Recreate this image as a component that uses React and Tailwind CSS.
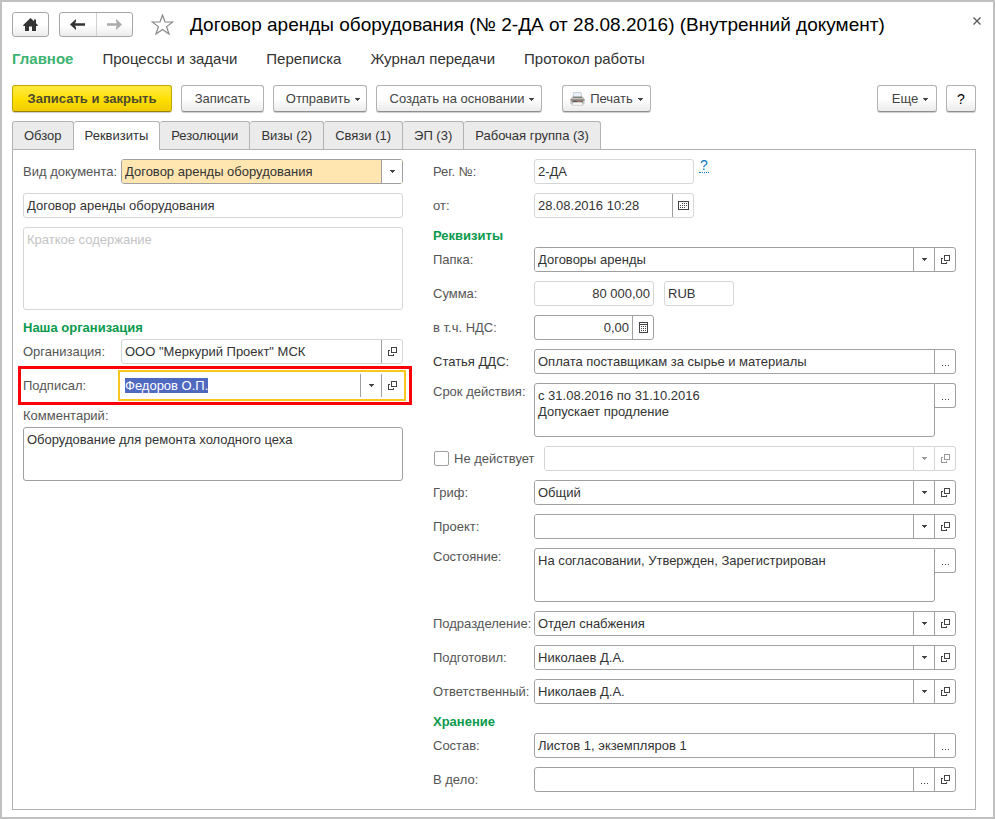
import { useEffect, useRef } from "react";

function ArrowIcon() {
  return (
    <svg width="5" height="3" viewBox="0 0 5 3" shapeRendering="crispEdges" fill="currentColor" aria-hidden="true">
      <path d="M0 0h5v1H4v1H3v1H2V2H1V1H0z" />
    </svg>
  );
}

function OpenIcon() {
  return (
    <svg width="9" height="9" viewBox="0 0 9 9" shapeRendering="crispEdges" fill="currentColor" aria-hidden="true">
      <path fillRule="evenodd" d="M3 0h6v6H3zM4 1v4h4V1z" />
      <path d="M0 3h2v1H1v4h4V7h1v2H0z" />
    </svg>
  );
}

function DotsIcon() {
  return (
    <svg width="7" height="9" viewBox="0 0 7 9" shapeRendering="crispEdges" fill="currentColor" aria-hidden="true">
      <path d="M0 8h1v1H0zM3 8h1v1H3zM6 8h1v1H6z" />
    </svg>
  );
}

function CalendarIcon() {
  return (
    <svg width="11" height="9" viewBox="0 0 11 9" shapeRendering="crispEdges" fill="currentColor" aria-hidden="true">
      <path fillRule="evenodd" d="M0 0h11v9H0zM1 1v7h9V1z" />
      <path d="M4 2h1v1H4zM6 2h1v1H6zM8 2h1v1H8zM2 4h1v1H2zM4 4h1v1H4zM6 4h1v1H6zM8 4h1v1H8zM2 6h1v1H2zM4 6h1v1H4zM6 6h1v1H6z" />
    </svg>
  );
}

function CalculatorIcon() {
  return (
    <svg width="9" height="11" viewBox="0 0 9 11" shapeRendering="crispEdges" fill="currentColor" aria-hidden="true">
      <path fillRule="evenodd" d="M0 0h9v11H0zM1 1v1h7V1zM1 3v7h7V3z" />
      <path d="M2 4h1v1H2zM4 4h1v1H4zM6 4h1v1H6zM2 6h1v1H2zM4 6h1v1H4zM6 6h1v1H6zM2 8h1v1H2zM4 8h1v1H4zM6 8h1v1H6z" />
    </svg>
  );
}

function PrinterIcon() {
  return (
    <svg width="15" height="14" viewBox="0 0 15 14" aria-hidden="true">
      <path d="M3.500.5h7.500l.8 5H3z" fill="#eaf1f8" stroke="#b4bfcb" strokeWidth=".7" />
      <path d="M2 4.800h11l1.500 2.200v4.500l-1 1H1.500l-1-1V7z" fill="#c4c0bc" />
      <path d="M3 4.600h9v1.300H3z" fill="#7d7d7d" />
      <path d="M.5 7.200h14v1.600H.5z" fill="#8c8884" />
      <path d="M2.500 8.800h10v1.500h-10z" fill="#4d4643" />
      <path d="M7 9h4v1H7z" fill="#b0604a" />
      <path d="M3 10.300h9l.7 3H2.300z" fill="#fafafa" stroke="#b8b8b8" strokeWidth=".6" />
    </svg>
  );
}

const icons = {
  open: [OpenIcon, "Открыть"],
  dots: [DotsIcon, "Выбрать"],
  calendar: [CalendarIcon, "Календарь"],
  calc: [CalculatorIcon, "Калькулятор"],
  arrow: [ArrowIcon, "Показать список"],
};

const textCls = "h-full w-full min-w-0 px-[3px] text-[13px] leading-4 text-[#333] outline-none";

function Frame({ light, focus, muted, className = "", children }) {
  const border = focus
    ? "border-transparent outline-2 outline-offset-1 outline-[#f7c61f]"
    : light
      ? "rounded-[3px] border-[#d6d6d6]"
      : "rounded-[3px] border-[#a0a0a0]";
  const tone = muted ? "text-[#999]" : "text-[#444]";
  return <div className={`flex h-[25px] min-w-0 border bg-white ${border} ${tone} ${className}`}>{children}</div>;
}

function CellButton({ icon, muted, label }) {
  const [Icon, title] = icons[icon];
  return (
    <button
      type="button"
      disabled={muted}
      aria-label={`${title}: ${label}`}
      className={`flex w-[21px] shrink-0 items-center justify-center border-l ${muted ? "border-[#d6d6d6]" : "border-[#a0a0a0]"}`}
    >
      <Icon />
    </button>
  );
}

function TextField({ id, label, value = "", buttons = [], light, right, className = "flex-1" }) {
  return (
    <Frame light={light} className={className}>
      <input id={id} aria-label={label} defaultValue={value} className={`${textCls} ${right ? "text-right" : ""}`} />
      {buttons.map((b) => (
        <CellButton key={b} icon={b} label={label} />
      ))}
    </Frame>
  );
}

function SelectField({ id, label, value = "", open = true, muted, fill, className = "flex-1" }) {
  return (
    <Frame light={muted} muted={muted} className={className}>
      <div className="grid min-w-0 flex-1">
        <select
          id={id}
          aria-label={label}
          disabled={muted}
          defaultValue={value}
          className={`col-start-1 row-start-1 appearance-none rounded-l-[2px] ${textCls} ${fill ? "bg-[#ffe6b0]" : "bg-white"}`}
        >
          <option value={value}>{value}</option>
        </select>
        <span
          className={`pointer-events-none col-start-1 row-start-1 flex w-[21px] items-center justify-center justify-self-end rounded-r-[2px] border-l bg-white ${muted ? "border-[#d6d6d6]" : "border-[#a0a0a0]"}`}
        >
          <ArrowIcon />
        </span>
      </div>
      {open && <CellButton icon="open" muted={muted} label={label} />}
    </Frame>
  );
}

function AreaField({ id, label, value }) {
  return (
    <div className="flex min-w-0 flex-1 items-start text-[#444]">
      <textarea
        id={id}
        defaultValue={value}
        className="h-[54px] min-w-0 flex-1 resize-none rounded-[3px] rounded-tr-none border border-[#a0a0a0] px-[3px] py-1 text-[13px] leading-4 text-[#333] outline-none"
      />
      <button
        type="button"
        aria-label={`Выбрать: ${label}`}
        className="flex h-[25px] w-[21px] items-center justify-center rounded-r-[3px] border border-l-0 border-[#a0a0a0]"
      >
        <DotsIcon />
      </button>
    </div>
  );
}

function Row({ id, label, top, dark, narrow, children }) {
  return (
    <div className={`flex ${top ? "items-start" : "items-center"}`}>
      <label
        htmlFor={id}
        className={`shrink-0 whitespace-nowrap leading-4 ${top ? "pt-px" : ""} ${narrow ? "w-[98px]" : "w-[101px]"} ${dark ? "text-[#333]" : "text-[#555]"}`}
      >
        {label}
      </label>
      {children}
    </div>
  );
}

function Heading({ children }) {
  return <h2 className="-mt-px -mb-2 h-5 text-[13px] leading-5 font-bold text-[#0a9a4c]">{children}</h2>;
}

function SignerField() {
  const ref = useRef(null);
  useEffect(() => {
    ref.current.focus();
    ref.current.select();
  }, []);
  return (
    <Frame focus className="flex-1">
      <input
        ref={ref}
        id="signer"
        defaultValue="Федоров О.П."
        className={`${textCls} selection:bg-[#4f68c0] selection:text-white`}
      />
      <CellButton icon="arrow" label="Подписал" />
      <CellButton icon="open" label="Подписал" />
    </Frame>
  );
}

function ToolButton({ children, arrow, className = "" }) {
  return (
    <button
      type="button"
      className={`flex h-[27px] items-center justify-center gap-[5px] rounded-[3px] border border-[#b3b3b3] border-b-[#8f8f8f] bg-linear-to-b from-white from-50% to-[#ececec] text-[13px] whitespace-nowrap text-[#444] shadow-[0_1px_0_#d0d0d0] ${className}`}
    >
      {children}
      {arrow && (
        <span className="mt-[2px]">
          <ArrowIcon />
        </span>
      )}
    </button>
  );
}

const sections = ["Процессы и задачи", "Переписка", "Журнал передачи", "Протокол работы"];

const tabs = ["Обзор", "Реквизиты", "Резолюции", "Визы (2)", "Связи (1)", "ЭП (3)", "Рабочая группа (3)"];

export default function App() {
  return (
    <div className="min-h-screen border-2 border-[#c0c0c0] bg-white pt-[10px] pr-[17px] pb-[7px] pl-[10px] font-['Liberation_Sans',Arial,sans-serif] text-[13px] text-[#333]">
      <header className="-mr-[9px] flex h-[25px] items-center">
        <button
          type="button"
          aria-label="Домой"
          className="flex h-[25px] w-[37px] items-center justify-center rounded-[3px] border border-[#a6a6a6] bg-linear-to-b from-white from-50% to-[#ececec]"
        >
          <svg width="15" height="13" viewBox="0 0 15 13" fill="#333" aria-hidden="true">
            <path d="M7.500 0 11 3.300V1.500h2v3.700l2 2-.6.800H13v5H9V8.500H6V13H2V8H.6L0 7.200z" />
          </svg>
        </button>
        <div className="ml-[10px] flex h-[25px] w-[74px] rounded-[3px] border border-[#a6a6a6] bg-linear-to-b from-white from-50% to-[#ececec]">
          <button type="button" aria-label="Назад" className="flex flex-1 items-center justify-center border-r border-[#d0d0d0]">
            <svg width="15" height="11" viewBox="0 0 15 11" fill="#333" aria-hidden="true">
              <path d="M0 5.500 6 0v2.500L5 4.200h10v2.600H5l1 1.700V11z" />
            </svg>
          </button>
          <button type="button" aria-label="Вперед" className="flex flex-1 items-center justify-center">
            <svg width="15" height="11" viewBox="0 0 15 11" fill="#aaa" aria-hidden="true">
              <path d="M15 5.500 9 0v2.500l1 1.700H0v2.600h10L9 8.500V11z" />
            </svg>
          </button>
        </div>
        <button type="button" aria-label="Добавить в избранное" className="ml-[18px]">
          <svg width="23" height="21" viewBox="0 0 23 21" fill="none" stroke="#888" strokeWidth="1.200" aria-hidden="true">
            <path d="M11.500 1 14 8h7.800l-6.200 4.600 2.400 7.400-6.500-4.500L5 20l2.400-7.400L1.200 8H9z" />
          </svg>
        </button>
        <h1 className="ml-4 flex-1 text-[19px] leading-6 whitespace-nowrap text-black">
          Договор аренды оборудования (№ 2-ДА от 28.08.2016) (Внутренний документ)
        </h1>
        <button type="button" aria-label="Закрыть" className="-mt-2 flex p-1">
          <svg width="8" height="8" viewBox="0 0 8 8" stroke="#555" strokeWidth="1.300" aria-hidden="true">
            <path d="M.5.5l7 7M7.500.5l-7 7" />
          </svg>
        </button>
      </header>

      <nav className="mt-3 flex h-5 items-center gap-[29px] text-[15px] leading-5 whitespace-nowrap text-[#333]">
        <a href="#main" className="font-bold text-[#3cb371]">
          Главное
        </a>
        {sections.map((s) => (
          <a key={s} href="#section">
            {s}
          </a>
        ))}
      </nav>

      <div className="mt-4 flex gap-[9px]">
        <button
          type="button"
          className="h-[27px] w-[160px] rounded-[3px] border border-[#c0a800] border-b-[#948200] bg-linear-to-b from-[#ffea3c] via-[#ffe000] to-[#f0cc00] text-[13px] font-bold whitespace-nowrap text-[#4d4a30] shadow-[0_1px_0_#d0d0d0]"
        >
          Записать и закрыть
        </button>
        <ToolButton className="w-[83px]">Записать</ToolButton>
        <ToolButton arrow className="w-[94px] pl-[6px]">
          Отправить
        </ToolButton>
        <ToolButton arrow className="w-[166px] pl-[6px]">
          Создать на основании
        </ToolButton>
        <ToolButton arrow className="ml-[11px] w-[89px]">
          <PrinterIcon />
          Печать
        </ToolButton>
        <ToolButton arrow className="ml-auto w-[60px] pl-[6px]">
          Еще
        </ToolButton>
        <ToolButton className="w-[30px]">
          <span className="text-sm text-black">?</span>
        </ToolButton>
      </div>

      <div role="tablist" className="mt-[9px] flex">
        {tabs.map((t, i) => (
          <button
            key={t}
            type="button"
            role="tab"
            aria-selected={i === 1}
            className={`rounded-t-[3px] border-t border-r border-[#b3b3b3] px-[11px] whitespace-nowrap first:border-l ${i === 1 ? "relative -mb-px h-[29px] bg-white" : "h-7 bg-[#ebebeb]"}`}
          >
            {t}
          </button>
        ))}
      </div>

      <main className="grid grid-cols-[380fr_523fr] gap-x-[30px] border border-[#b3b3b3] pt-[9px] pr-[19px] pb-[17px] pl-[10px]">
        <section className="flex flex-col gap-[9px]">
          <Row id="kind" label="Вид документа:" narrow>
            <SelectField id="kind" label="Вид документа" value="Договор аренды оборудования" open={false} fill />
          </Row>
          <TextField label="Наименование" value="Договор аренды оборудования" light className="" />
          <textarea
            aria-label="Краткое содержание"
            placeholder="Краткое содержание"
            className="h-[83px] resize-none rounded-[3px] border border-[#d6d6d6] px-[3px] py-1 text-[13px] leading-4 outline-none placeholder:text-[#c4c4c4]"
          />
          <Heading>Наша организация</Heading>
          <Row id="org" label="Организация:" narrow>
            <TextField id="org" label="Организация" value={'ООО "Меркурий Проект" МСК'} buttons={["open"]} light />
          </Row>
          <div className="relative">
            <Row id="signer" label="Подписал:" narrow>
              <SignerField />
            </Row>
            <div className="pointer-events-none absolute -inset-y-[7px] -right-[9px] -left-[5px] border-3 border-[#fb0007]" />
          </div>
          <label htmlFor="comment" className="-mt-px -mb-2 h-5 leading-5 text-[#555]">
            Комментарий:
          </label>
          <textarea
            id="comment"
            defaultValue="Оборудование для ремонта холодного цеха"
            className="h-[54px] resize-none rounded-[3px] border border-[#a0a0a0] px-[3px] py-1 text-[13px] leading-4 outline-none"
          />
        </section>

        <section className="flex flex-col gap-[9px]">
          <Row id="reg" label="Рег. №:">
            <TextField id="reg" label="Рег. №" value="2-ДА" light className="w-[160px]" />
            <a
              href="#help"
              className="ml-[5px] self-start border-b border-dotted border-[#0b78c2] px-px text-sm leading-[13px] text-[#0b78c2]"
            >
              ?
            </a>
          </Row>
          <Row id="date" label="от:">
            <TextField id="date" label="от" value="28.08.2016 10:28" buttons={["calendar"]} light className="w-[160px]" />
          </Row>
          <Heading>Реквизиты</Heading>
          <Row id="folder" label="Папка:">
            <SelectField id="folder" label="Папка" value="Договоры аренды" />
          </Row>
          <Row id="sum" label="Сумма:">
            <TextField id="sum" label="Сумма" value="80 000,00" light right className="w-[120px]" />
            <TextField label="Валюта" value="RUB" light className="ml-[10px] w-[70px]" />
          </Row>
          <Row id="vat" label="в т.ч. НДС:">
            <TextField id="vat" label="в т.ч. НДС" value="0,00" right buttons={["calc"]} className="w-[120px]" />
          </Row>
          <Row id="item" label="Статья ДДС:" dark>
            <TextField id="item" label="Статья ДДС" value="Оплата поставщикам за сырье и материалы" buttons={["dots"]} />
          </Row>
          <Row id="term" label="Срок действия:" top>
            <AreaField id="term" label="Срок действия" value={"с 31.08.2016 по 31.10.2016\nДопускает продление"} />
          </Row>
          <div className="flex items-center">
            <label className="flex w-[111px] shrink-0 items-center gap-[5px] pl-px whitespace-nowrap text-[#555]">
              <input type="checkbox" className="h-[15px] w-[15px] appearance-none rounded-[2px] border border-[#a0a0a0] bg-white" />
              Не действует
            </label>
            <SelectField label="Причина" muted />
          </div>
          <Row id="grif" label="Гриф:">
            <SelectField id="grif" label="Гриф" value="Общий" />
          </Row>
          <Row id="project" label="Проект:">
            <SelectField id="project" label="Проект" />
          </Row>
          <Row id="state" label="Состояние:" top>
            <AreaField id="state" label="Состояние" value="На согласовании, Утвержден, Зарегистрирован" />
          </Row>
          <Row id="dept" label="Подразделение:">
            <SelectField id="dept" label="Подразделение" value="Отдел снабжения" />
          </Row>
          <Row id="author" label="Подготовил:">
            <SelectField id="author" label="Подготовил" value="Николаев Д.А." />
          </Row>
          <Row id="owner" label="Ответственный:">
            <SelectField id="owner" label="Ответственный" value="Николаев Д.А." />
          </Row>
          <Heading>Хранение</Heading>
          <Row id="content" label="Состав:">
            <TextField id="content" label="Состав" value="Листов 1, экземпляров 1" buttons={["dots"]} />
          </Row>
          <Row id="file" label="В дело:">
            <TextField id="file" label="В дело" buttons={["dots", "open"]} />
          </Row>
        </section>
      </main>
    </div>
  );
}
